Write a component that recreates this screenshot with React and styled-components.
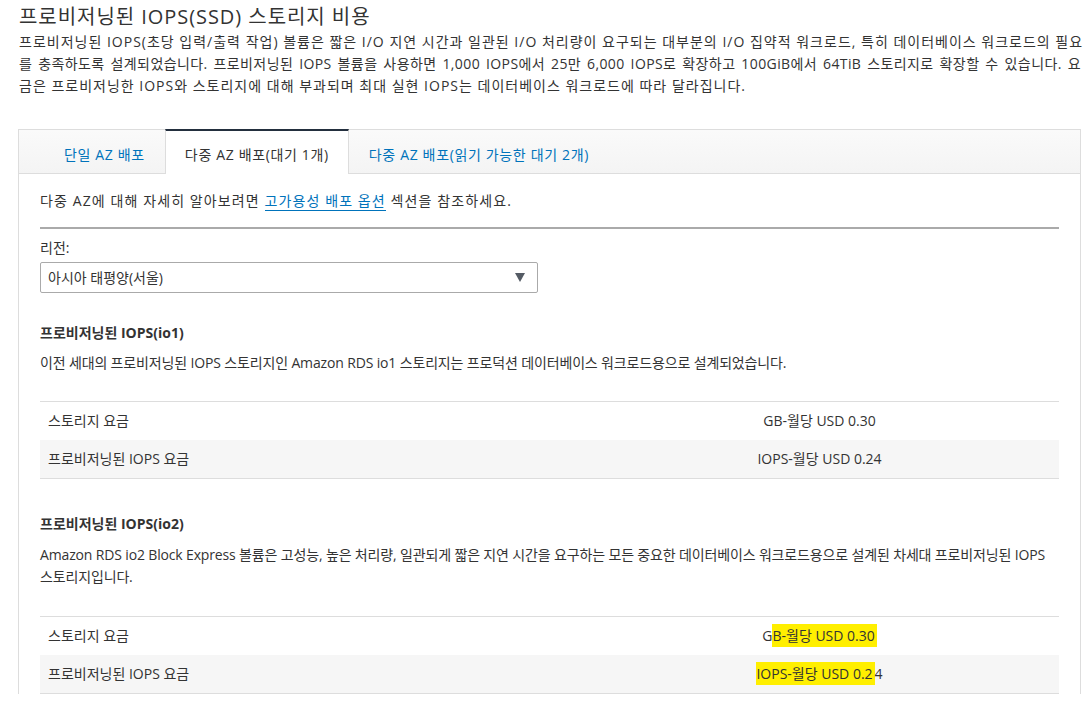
import React from 'react';
import styled, { createGlobalStyle } from 'styled-components';

const Global = createGlobalStyle`
  body {
    margin: 0;
    background: #fff;
    font-family: "Open Sans", "Noto Sans CJK KR", sans-serif;
    color: #333;
  }
`;

const Page = styled.div`
  padding: 0 10px 0 19px;
`;

const Title = styled.h2`
  margin: 3px 0 0;
  font-size: 20px;
  font-weight: 400;
  line-height: 28px;
  letter-spacing: 0.95px;
  color: #333;
`;

const Intro = styled.div`
  font-size: 14px;
  line-height: 22px;
`;

const IntroLine = styled.span`
  display: block;
  white-space: nowrap;
  letter-spacing: ${p => p.spacing}px;
  text-align-last: ${p => (p.fill ? 'justify' : 'auto')};
`;

const TabsBox = styled.div`
  margin: 32px 0 0 -1px;
  border: 1px solid #ddd;
  border-bottom: none;
`;

const TabBar = styled.div`
  display: flex;
  height: 43px;
  padding-left: 25px;
  background: linear-gradient(#fafafa, #f4f4f4);
  border-bottom: 1px solid #ddd;
`;

const Tab = styled.div`
  display: flex;
  align-items: center;
  padding: 2px 19px 0;
  font-size: 14px;
  letter-spacing: 0.65px;
  color: ${p => (p.active ? '#333' : '#0073bb')};
  background: ${p => (p.active ? '#fff' : 'transparent')};
  border-left: 1px solid ${p => (p.active ? '#ddd' : 'transparent')};
  border-right: 1px solid ${p => (p.active ? '#ddd' : 'transparent')};
  border-top: 2px solid ${p => (p.active ? '#232f3e' : 'transparent')};
  margin-top: -1px;
  margin-bottom: -1px;
`;

const Panel = styled.div`
  padding: 16px 21px 0 21px;
  font-size: 14px;
  line-height: 22px;
`;

const Text = styled.p`
  margin: 0;
  letter-spacing: ${p => (p.wide ? '1.1px' : '-0.15px')};
`;

const Link = styled.a`
  color: #0073bb;
  text-decoration: none;
  border-bottom: 1px solid #0073bb;
`;

const Divider = styled.hr`
  margin: 15px 0 8px;
  border: none;
  border-top: 2px solid #aaa;
`;

const Label = styled.div`
  margin-bottom: 3px;
`;

const Select = styled.div`
  box-sizing: border-box;
  width: 498px;
  height: 31px;
  display: flex;
  align-items: center;
  justify-content: space-between;
  padding: 0 12px 0 7px;
  border: 1px solid #aaa;
  border-radius: 2px;
`;

const Arrow = styled.span`
  width: 0;
  height: 0;
  border-left: 5px solid transparent;
  border-right: 5px solid transparent;
  border-top: 9px solid #545b64;
`;

const SectionTitle = styled.h4`
  margin: ${p => p.top}px 0 ${p => p.bottom}px;
  font-size: 14px;
  font-weight: 700;
  line-height: 22px;
`;

const Table = styled.table`
  width: 100%;
  border-collapse: collapse;
  margin-top: ${p => p.top}px;
  border-top: 1px solid #ddd;
  border-bottom: 1px solid #ddd;
`;

const Row = styled.tr`
  background: ${p => (p.shade ? '#f6f6f6' : '#fff')};
`;

const Cell = styled.td`
  height: 38px;
  padding: 0 8px;
  font-size: 14px;
  text-align: ${p => (p.value ? 'center' : 'left')};
  width: ${p => (p.value ? '47%' : 'auto')};
`;

const Mark = styled.span`
  background: #ffef00;
  padding: 2px 2px 2px 0;
`;

const PriceTable = ({ top, marked }) => (
  <Table top={top}>
    <tbody>
      <Row>
        <Cell>스토리지 요금</Cell>
        <Cell value>
          {marked ? <>G<Mark>B-월당 USD 0.30 </Mark></> : 'GB-월당 USD 0.30'}
        </Cell>
      </Row>
      <Row shade>
        <Cell>프로비저닝된 IOPS 요금</Cell>
        <Cell value>
          {marked ? <><Mark>IOPS-월당 USD 0.2</Mark>4</> : 'IOPS-월당 USD 0.24'}
        </Cell>
      </Row>
    </tbody>
  </Table>
);

export default function App() {
  return (
    <Page>
      <Global />
      <Title>프로비저닝된 IOPS(SSD) 스토리지 비용</Title>
      <Intro>
        <IntroLine spacing={1} fill>프로비저닝된 IOPS(초당 입력/출력 작업) 볼륨은 짧은 I/O 지연 시간과 일관된 I/O 처리량이 요구되는 대부분의 I/O 집약적 워크로드, 특히 데이터베이스 워크로드의 필요</IntroLine>
        <IntroLine spacing={0.4} fill>를 충족하도록 설계되었습니다. 프로비저닝된 IOPS 볼륨을 사용하면 1,000 IOPS에서 25만 6,000 IOPS로 확장하고 100GiB에서 64TiB 스토리지로 확장할 수 있습니다. 요</IntroLine>
        <IntroLine spacing={1}>금은 프로비저닝한 IOPS와 스토리지에 대해 부과되며 최대 실현 IOPS는 데이터베이스 워크로드에 따라 달라집니다.</IntroLine>
      </Intro>
      <TabsBox>
        <TabBar>
          <Tab>단일 AZ 배포</Tab>
          <Tab active>다중 AZ 배포(대기 1개)</Tab>
          <Tab>다중 AZ 배포(읽기 가능한 대기 2개)</Tab>
        </TabBar>
        <Panel>
          <Text wide>
            다중 AZ에 대해 자세히 알아보려면 <Link href="#">고가용성 배포 옵션</Link> 섹션을 참조하세요.
          </Text>
          <Divider />
          <Label>리전:</Label>
          <Select>
            <span>아시아 태평양(서울)</span>
            <Arrow />
          </Select>
          <SectionTitle top={29} bottom={8}>프로비저닝된 IOPS(io1)</SectionTitle>
          <Text>이전 세대의 프로비저닝된 IOPS 스토리지인 Amazon RDS io1 스토리지는 프로덕션 데이터베이스 워크로드용으로 설계되었습니다.</Text>
          <PriceTable top={27} />
          <SectionTitle top={34} bottom={9}>프로비저닝된 IOPS(io2)</SectionTitle>
          <Text>Amazon RDS io2 Block Express 볼륨은 고성능, 높은 처리량, 일관되게 짧은 지연 시간을 요구하는 모든 중요한 데이터베이스 워크로드용으로 설계된 차세대 프로비저닝된 IOPS 스토리지입니다.</Text>
          <PriceTable top={28} marked />
        </Panel>
      </TabsBox>
    </Page>
  );
}
